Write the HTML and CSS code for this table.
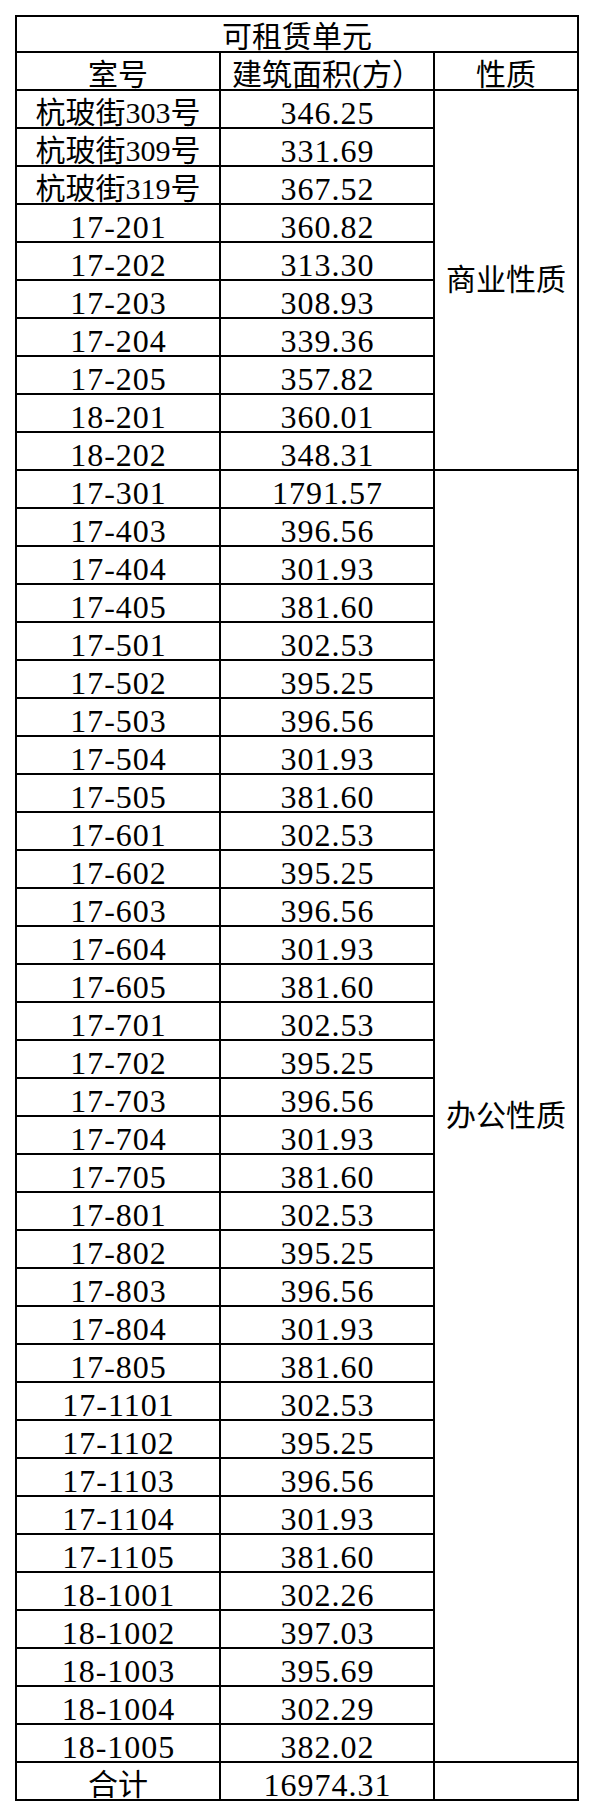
FILE: index.html
```html
<!DOCTYPE html>
<html lang="zh-CN">
<head>
<meta charset="utf-8">
<title>可租赁单元</title>
<link rel="stylesheet" href="styles.css">
</head>
<body>
<table class="units">
  <colgroup>
    <col class="c-room">
    <col class="c-area">
    <col class="c-kind">
  </colgroup>
  <tbody>
    <tr class="r-title"><td colspan="3">可租赁单元</td></tr>
    <tr><td>室号</td><td>建筑面积(方）</td><td>性质</td></tr>
    <tr><td>杭玻街303号</td><td class="n">346.25</td><td class="kind" rowspan="10">商业性质</td></tr>
    <tr><td>杭玻街309号</td><td class="n">331.69</td></tr>
    <tr><td>杭玻街319号</td><td class="n">367.52</td></tr>
    <tr><td class="n">17-201</td><td class="n">360.82</td></tr>
    <tr><td class="n">17-202</td><td class="n">313.30</td></tr>
    <tr><td class="n">17-203</td><td class="n">308.93</td></tr>
    <tr><td class="n">17-204</td><td class="n">339.36</td></tr>
    <tr><td class="n">17-205</td><td class="n">357.82</td></tr>
    <tr><td class="n">18-201</td><td class="n">360.01</td></tr>
    <tr><td class="n">18-202</td><td class="n">348.31</td></tr>
    <tr><td class="n">17-301</td><td class="n">1791.57</td><td class="kind" rowspan="34">办公性质</td></tr>
    <tr><td class="n">17-403</td><td class="n">396.56</td></tr>
    <tr><td class="n">17-404</td><td class="n">301.93</td></tr>
    <tr><td class="n">17-405</td><td class="n">381.60</td></tr>
    <tr><td class="n">17-501</td><td class="n">302.53</td></tr>
    <tr><td class="n">17-502</td><td class="n">395.25</td></tr>
    <tr><td class="n">17-503</td><td class="n">396.56</td></tr>
    <tr><td class="n">17-504</td><td class="n">301.93</td></tr>
    <tr><td class="n">17-505</td><td class="n">381.60</td></tr>
    <tr><td class="n">17-601</td><td class="n">302.53</td></tr>
    <tr><td class="n">17-602</td><td class="n">395.25</td></tr>
    <tr><td class="n">17-603</td><td class="n">396.56</td></tr>
    <tr><td class="n">17-604</td><td class="n">301.93</td></tr>
    <tr><td class="n">17-605</td><td class="n">381.60</td></tr>
    <tr><td class="n">17-701</td><td class="n">302.53</td></tr>
    <tr><td class="n">17-702</td><td class="n">395.25</td></tr>
    <tr><td class="n">17-703</td><td class="n">396.56</td></tr>
    <tr><td class="n">17-704</td><td class="n">301.93</td></tr>
    <tr><td class="n">17-705</td><td class="n">381.60</td></tr>
    <tr><td class="n">17-801</td><td class="n">302.53</td></tr>
    <tr><td class="n">17-802</td><td class="n">395.25</td></tr>
    <tr><td class="n">17-803</td><td class="n">396.56</td></tr>
    <tr><td class="n">17-804</td><td class="n">301.93</td></tr>
    <tr><td class="n">17-805</td><td class="n">381.60</td></tr>
    <tr><td class="n">17-1101</td><td class="n">302.53</td></tr>
    <tr><td class="n">17-1102</td><td class="n">395.25</td></tr>
    <tr><td class="n">17-1103</td><td class="n">396.56</td></tr>
    <tr><td class="n">17-1104</td><td class="n">301.93</td></tr>
    <tr><td class="n">17-1105</td><td class="n">381.60</td></tr>
    <tr><td class="n">18-1001</td><td class="n">302.26</td></tr>
    <tr><td class="n">18-1002</td><td class="n">397.03</td></tr>
    <tr><td class="n">18-1003</td><td class="n">395.69</td></tr>
    <tr><td class="n">18-1004</td><td class="n">302.29</td></tr>
    <tr><td class="n">18-1005</td><td class="n">382.02</td></tr>
    <tr><td>合计</td><td class="n">16974.31</td><td></td></tr>
  </tbody>
</table>
</body>
</html>
```

FILE: styles.css
```css
html, body {
  margin: 0;
  padding: 0;
  background: #fff;
}

body {
  padding: 15px 0 0 15px;
  font-family: "Liberation Serif", "Noto Sans CJK SC", serif;
  font-size: 30px;
  color: #000;
}

.units {
  border-collapse: separate;
  border-spacing: 0;
  table-layout: fixed;
  width: 564px;
  border-top: 2px solid #000;
  border-left: 2px solid #000;
}

.c-room { width: 204px; }
.c-area { width: 214px; }
.c-kind { width: 144px; }

.units td {
  box-sizing: border-box;
  height: 38px;
  padding: 0;
  border-right: 2px solid #000;
  border-bottom: 2px solid #000;
  text-align: center;
  vertical-align: bottom;
  line-height: 28px;
  white-space: nowrap;
}

.units .r-title td {
  height: 36px;
}

.units td.n {
  font-size: 32px;
  letter-spacing: 1px;
  text-indent: 1px;
}

.units td.kind {
  vertical-align: middle;
  height: auto;
}
```
